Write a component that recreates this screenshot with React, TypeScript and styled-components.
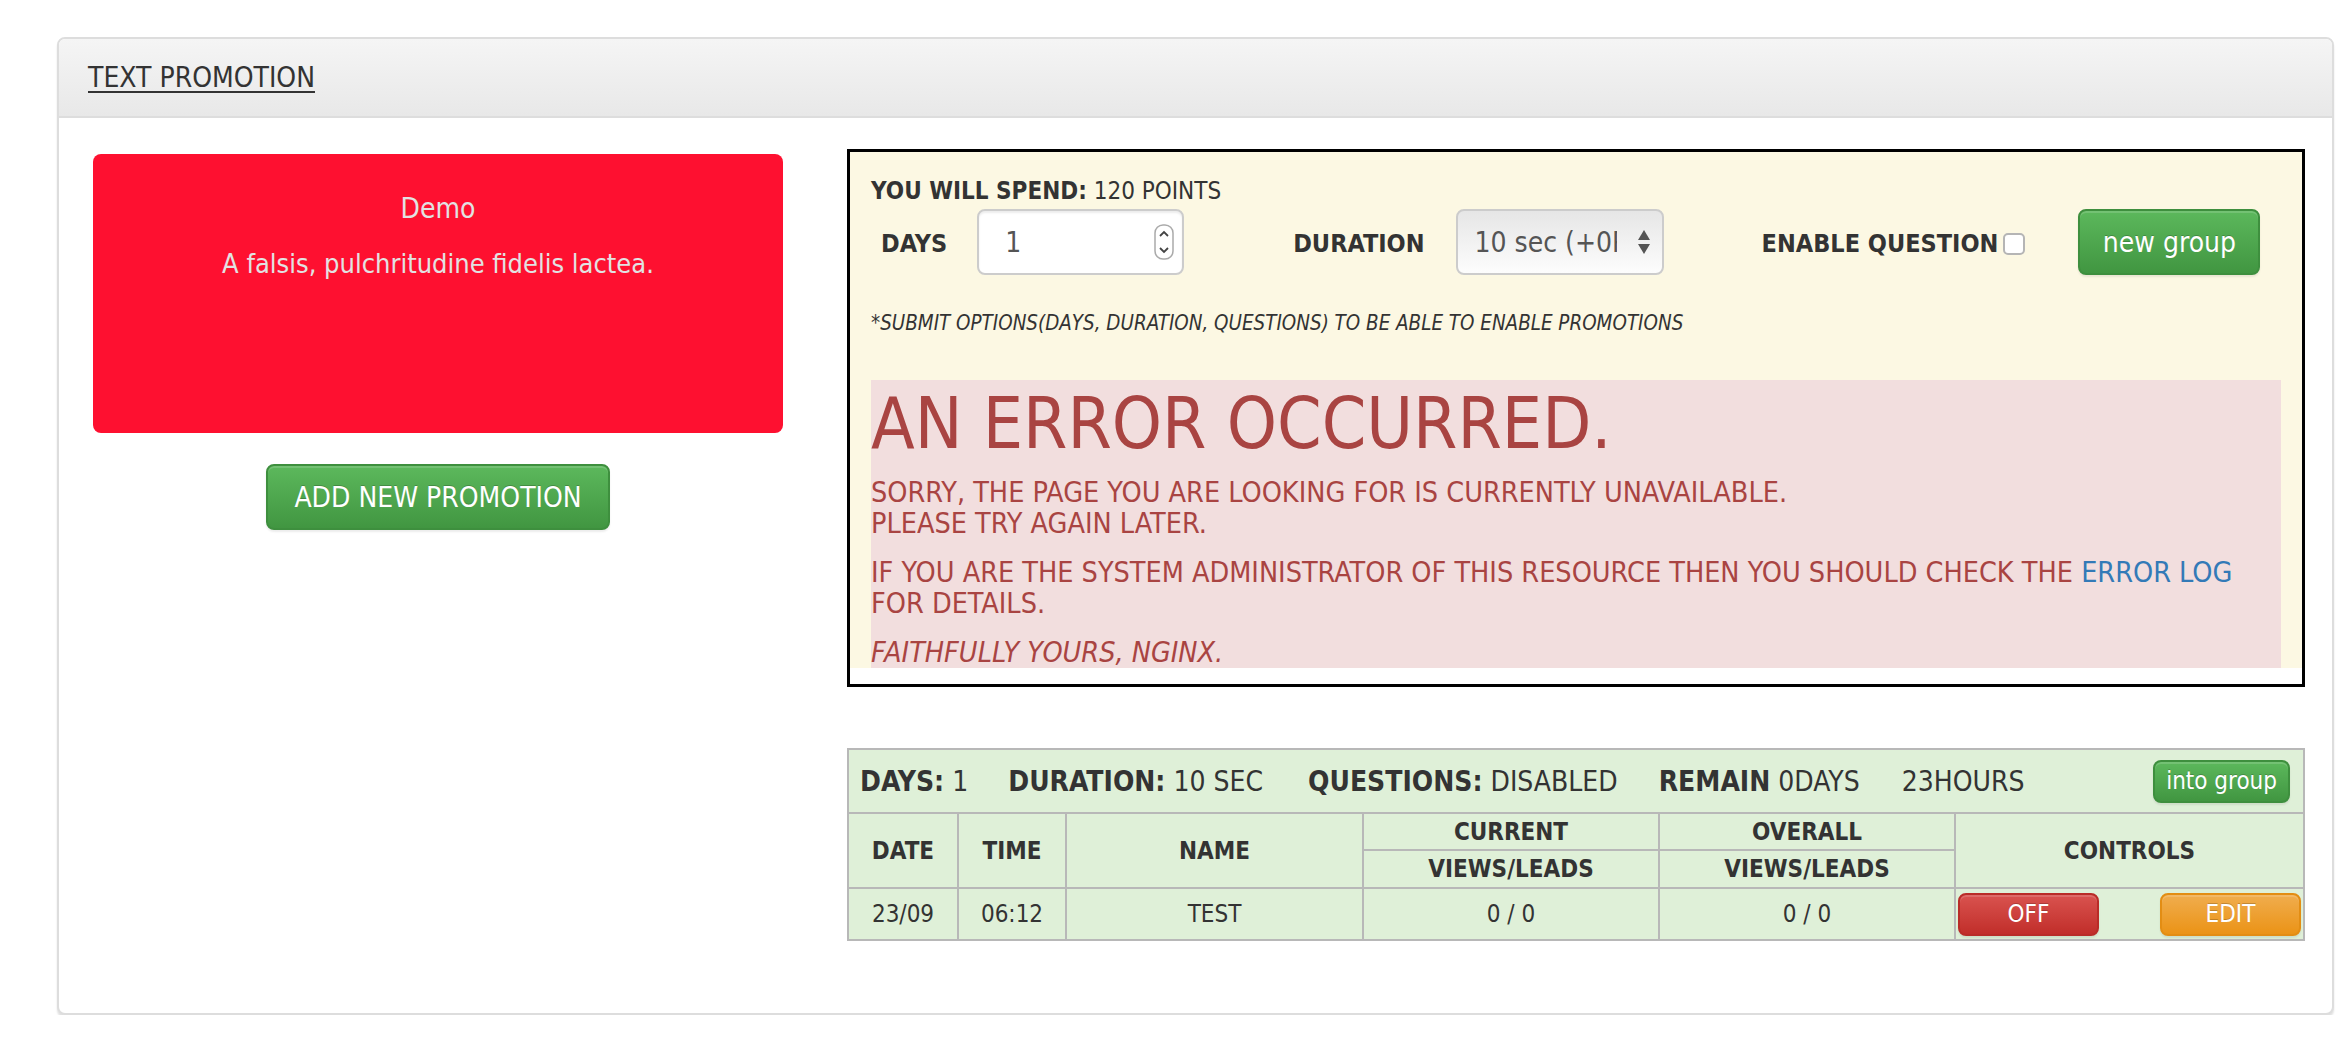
import React from 'react';
import styled, {createGlobalStyle} from 'styled-components';

const FONT = `'DejaVu Sans Condensed', 'DejaVu Sans', sans-serif`;

const GlobalStyle = createGlobalStyle`
  html, body {
    margin: 0;
    padding: 0;
    background: #fff;
  }
  body {
    font-family: ${FONT};
    font-size: 28px;
    color: #333;
  }
`;

const Panel = styled.div`
  margin: 37px 8px 0 57px;
  border: 2px solid #ddd;
  border-radius: 8px;
  box-shadow: 0 3px 2px rgba(0, 0, 0, 0.12);
  background: #fff;
`;

const PanelHeading = styled.div`
  height: 77px;
  display: flex;
  align-items: center;
  padding: 0 29px;
  background: linear-gradient(to bottom, #f5f5f5, #e8e8e8);
  border-bottom: 2px solid #ddd;
  border-radius: 6px 6px 0 0;
`;

const PanelTitle = styled.a`
  color: #333;
  text-decoration: underline;
  text-decoration-thickness: 2px;
  text-underline-offset: 4px;
`;

const PanelBody = styled.div`
  display: grid;
  grid-template-columns: 690px 1fr;
  column-gap: 64px;
  padding: 31px 27px 72px 34px;
`;

const LeftColumn = styled.div`
  display: flex;
  flex-direction: column;
  align-items: center;
`;

const PromoCard = styled.div`
  align-self: stretch;
  margin-top: 5px;
  height: 279px;
  box-sizing: border-box;
  padding-top: 37px;
  background: #fe1030;
  border-radius: 8px;
  color: #e2e2e2;
  text-align: center;
`;

const PromoLine = styled.p<{$gap?: number; $size?: number}>`
  margin: 0 0 ${p => p.$gap ?? 0}px;
  font-size: ${p => p.$size ?? 28}px;
  line-height: 36px;
`;

const Button = styled.button<{$variant: 'success' | 'danger' | 'warning'; $size?: 'lg' | 'sm'}>`
  font-family: ${FONT};
  font-size: ${p => (p.$size === 'sm' ? 24 : 28)}px;
  color: #fff;
  height: ${p => (p.$size === 'sm' ? 43 : 66)}px;
  padding: 0 ${p => (p.$size === 'sm' ? 11 : 26)}px;
  border-radius: 8px;
  border: 2px solid
    ${p => ({success: '#3e8f3e', danger: '#b92c28', warning: '#e38d13'})[p.$variant]};
  background-image: ${p =>
    ({
      success: 'linear-gradient(to bottom, #5cb85c 0, #419641 100%)',
      danger: 'linear-gradient(to bottom, #d9534f 0, #c12e2a 100%)',
      warning: 'linear-gradient(to bottom, #f0ad4e 0, #eb9316 100%)',
    })[p.$variant]};
  box-shadow: inset 0 2px 0 rgba(255, 255, 255, 0.15), 0 2px 2px rgba(0, 0, 0, 0.075);
  text-shadow: 0 -1px 0 rgba(0, 0, 0, 0.2);
  cursor: pointer;
  white-space: nowrap;
`;

const AddButton = styled(Button)`
  margin-top: 31px;
`;

const RightColumn = styled.div`
  display: flex;
  flex-direction: column;
`;

const OptionsBox = styled.div`
  border: 3px solid #000;
  background: #fff;
  padding-bottom: 16px;
`;

const OptionsInner = styled.div`
  background: #fcf8e3;
  padding: 25px 21px 0;
`;

const SpendLine = styled.div`
  font-size: 24px;
  line-height: 28px;
  text-transform: uppercase;
`;

const ControlsRow = styled.div`
  display: flex;
  align-items: center;
  margin-top: 4px;
  padding-left: 10px;
`;

const Field = styled.div<{$gap?: number; $ml?: number}>`
  display: flex;
  align-items: center;
  gap: ${p => p.$gap ?? 30}px;
  margin-left: ${p => p.$ml ?? 0}px;
`;

const FieldLabel = styled.label`
  font-size: 25px;
  font-weight: bold;
  padding-top: 3px;
`;

const NumberBox = styled.div`
  width: 207px;
  height: 66px;
  box-sizing: border-box;
  display: flex;
  align-items: center;
  justify-content: space-between;
  padding: 0 8px 0 26px;
  background: #fff;
  border: 2px solid #ccc;
  border-radius: 8px;
  box-shadow: inset 0 2px 2px rgba(0, 0, 0, 0.075);
  color: #555;
`;

const SelectBox = styled.div`
  width: 208px;
  height: 66px;
  box-sizing: border-box;
  display: flex;
  align-items: center;
  justify-content: space-between;
  padding: 0 11px 0 17px;
  background: linear-gradient(to bottom, #e6e6e6, #fdfdfd);
  border: 2px solid #ccc;
  border-radius: 8px;
  color: #555;
`;

const SelectValue = styled.span`
  width: 142px;
  overflow: hidden;
  white-space: nowrap;
`;

const Checkbox = styled.span`
  width: 22px;
  height: 22px;
  box-sizing: border-box;
  border: 2px solid #b5b5b5;
  border-radius: 5px;
  background: #fff;
  margin-top: 3px;
`;

const NewGroupButton = styled(Button)`
  margin-left: 53px;
  width: 182px;
  padding: 0;
`;

const Note = styled.div`
  margin-top: 36px;
  font-size: 20.4px;
  line-height: 24px;
  font-style: italic;
`;

const ErrorBox = styled.div`
  margin-top: 45px;
  height: 288px;
  overflow: hidden;
  background: #f2dede;
  color: #a94442;
  font-size: 28.5px;
`;

const ErrorTitle = styled.h1`
  margin: 4px 0 14px;
  font-size: 71px;
  line-height: 79px;
  font-weight: normal;
`;

const ErrorPara = styled.p`
  margin: 0 0 18px;
  line-height: 31px;
`;

const ErrorLink = styled.a`
  color: #337ab7;
  text-decoration: none;
`;

const StatsTable = styled.table`
  margin-top: 61px;
  width: 100%;
  border-collapse: collapse;
  table-layout: fixed;
  background: #dff0d8;
  border: 2px solid #b8b8b8;
  font-size: 24px;
`;

const Col = styled.col<{$w: number}>`
  width: ${p => p.$w}px;
`;

const SummaryCell = styled.td`
  height: 62px;
  padding: 0 13px 0 11px;
  border: 2px solid #b8b8b8;
  font-size: 28px;
`;

const SummaryRow = styled.div`
  display: flex;
  align-items: center;
`;

const SummaryItem = styled.span<{$ml?: number}>`
  margin-left: ${p => p.$ml ?? 0}px;
  white-space: nowrap;
`;

const IntoGroup = styled(Button)`
  margin-left: auto;
`;

const Th = styled.th<{$h?: number}>`
  height: ${p => p.$h ?? 35}px;
  padding: 0;
  border: 2px solid #b8b8b8;
  font-weight: bold;
  text-align: center;
`;

const Td = styled.td`
  height: 50px;
  padding: 0;
  border: 2px solid #b8b8b8;
  text-align: center;
`;

const ControlsCell = styled(Td)`
  padding: 0 2px;
`;

const ControlsWrap = styled.div`
  display: flex;
  justify-content: space-between;
`;

const RowButton = styled(Button)`
  width: 141px;
  padding: 0;
`;

const Spinner = () => (
  <svg width="20" height="36" viewBox="0 0 20 36">
    <rect x="1" y="1" width="18" height="34" rx="8" fill="#fff" stroke="#aaa" strokeWidth="1.5" />
    <path d="M6 12 L10 8 L14 12" fill="none" stroke="#444" strokeWidth="1.8" />
    <path d="M6 24 L10 28 L14 24" fill="none" stroke="#444" strokeWidth="1.8" />
  </svg>
);

const SelectArrows = () => (
  <svg width="14" height="30" viewBox="0 0 14 30">
    <path d="M7 3 L13 13 L1 13 Z" fill="#555" />
    <path d="M1 17 L13 17 L7 27 Z" fill="#555" />
  </svg>
);

export default function App() {
  return (
    <>
      <GlobalStyle />
      <Panel>
        <PanelHeading>
          <PanelTitle>TEXT PROMOTION</PanelTitle>
        </PanelHeading>
        <PanelBody>
          <LeftColumn>
            <PromoCard>
              <PromoLine $gap={19}>Demo</PromoLine>
              <PromoLine $size={27}>A falsis, pulchritudine fidelis lactea.</PromoLine>
            </PromoCard>
            <AddButton $variant="success">ADD NEW PROMOTION</AddButton>
          </LeftColumn>

          <RightColumn>
            <OptionsBox>
              <OptionsInner>
                <SpendLine>
                  <b>You will spend:</b> 120 points
                </SpendLine>
                <ControlsRow>
                  <Field>
                    <FieldLabel>DAYS</FieldLabel>
                    <NumberBox>
                      <span>1</span>
                      <Spinner />
                    </NumberBox>
                  </Field>
                  <Field $ml={109} $gap={31}>
                    <FieldLabel>DURATION</FieldLabel>
                    <SelectBox>
                      <SelectValue>10 sec (+0P)</SelectValue>
                      <SelectArrows />
                    </SelectBox>
                  </Field>
                  <Field $ml={98} $gap={5}>
                    <FieldLabel>ENABLE QUESTION</FieldLabel>
                    <Checkbox />
                  </Field>
                  <NewGroupButton $variant="success">new group</NewGroupButton>
                </ControlsRow>
                <Note>*SUBMIT OPTIONS(DAYS, DURATION, QUESTIONS) TO BE ABLE TO ENABLE PROMOTIONS</Note>
                <ErrorBox>
                  <ErrorTitle>AN ERROR OCCURRED.</ErrorTitle>
                  <ErrorPara>
                    SORRY, THE PAGE YOU ARE LOOKING FOR IS CURRENTLY UNAVAILABLE.
                    <br />
                    PLEASE TRY AGAIN LATER.
                  </ErrorPara>
                  <ErrorPara>
                    IF YOU ARE THE SYSTEM ADMINISTRATOR OF THIS RESOURCE THEN YOU SHOULD CHECK THE{' '}
                    <ErrorLink>ERROR LOG</ErrorLink>
                    <br />
                    FOR DETAILS.
                  </ErrorPara>
                  <ErrorPara>
                    <em>FAITHFULLY YOURS, NGINX.</em>
                  </ErrorPara>
                </ErrorBox>
              </OptionsInner>
            </OptionsBox>

            <StatsTable>
              <colgroup>
                <Col $w={110} />
                <Col $w={108} />
                <Col $w={297} />
                <Col $w={296} />
                <Col $w={296} />
                <Col $w={349} />
              </colgroup>
              <tbody>
                <tr>
                  <SummaryCell colSpan={6}>
                    <SummaryRow>
                      <SummaryItem>
                        <b>DAYS:</b> 1
                      </SummaryItem>
                      <SummaryItem $ml={40}>
                        <b>DURATION:</b> 10 SEC
                      </SummaryItem>
                      <SummaryItem $ml={45}>
                        <b>QUESTIONS:</b> DISABLED
                      </SummaryItem>
                      <SummaryItem $ml={41}>
                        <b>REMAIN</b> 0DAYS
                      </SummaryItem>
                      <SummaryItem $ml={42}>23HOURS</SummaryItem>
                      <IntoGroup $variant="success" $size="sm">
                        into group
                      </IntoGroup>
                    </SummaryRow>
                  </SummaryCell>
                </tr>
                <tr>
                  <Th rowSpan={2}>DATE</Th>
                  <Th rowSpan={2}>TIME</Th>
                  <Th rowSpan={2}>NAME</Th>
                  <Th>CURRENT</Th>
                  <Th>OVERALL</Th>
                  <Th rowSpan={2}>CONTROLS</Th>
                </tr>
                <tr>
                  <Th $h={36}>VIEWS/LEADS</Th>
                  <Th $h={36}>VIEWS/LEADS</Th>
                </tr>
                <tr>
                  <Td>23/09</Td>
                  <Td>06:12</Td>
                  <Td>TEST</Td>
                  <Td>0 / 0</Td>
                  <Td>0 / 0</Td>
                  <ControlsCell>
                    <ControlsWrap>
                      <RowButton $variant="danger" $size="sm">
                        OFF
                      </RowButton>
                      <RowButton $variant="warning" $size="sm">
                        EDIT
                      </RowButton>
                    </ControlsWrap>
                  </ControlsCell>
                </tr>
              </tbody>
            </StatsTable>
          </RightColumn>
        </PanelBody>
      </Panel>
    </>
  );
}
